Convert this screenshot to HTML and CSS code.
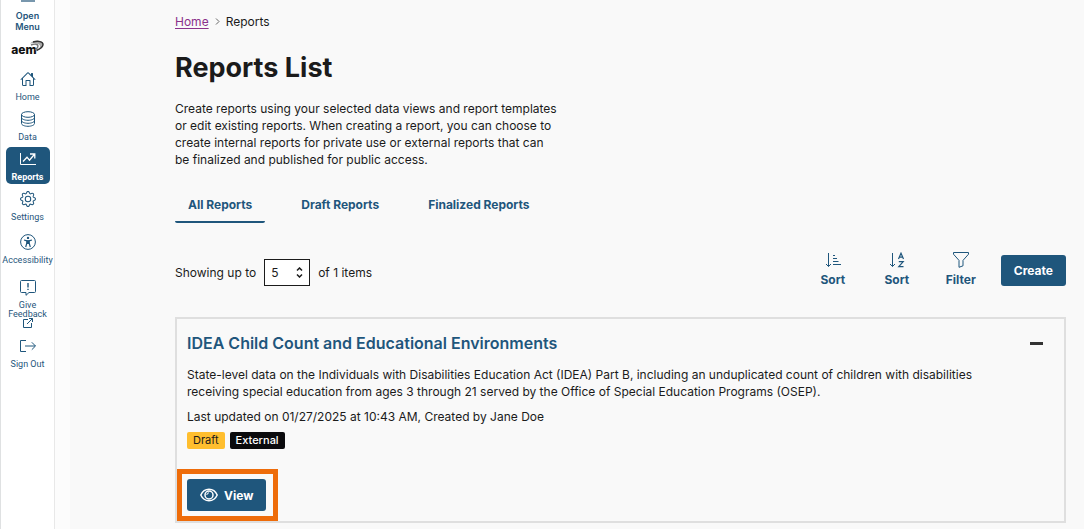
FILE: index.html
```html
<!DOCTYPE html>
<html lang="en">
<head>
  <meta charset="UTF-8">
  <meta name="viewport" content="width=device-width, initial-scale=1">
  <title>Reports List</title>
  <link rel="stylesheet" href="styles.css">
</head>
<body>
  <nav class="sidebar" aria-label="Main">
    <button class="menu-toggle" type="button">
      <span class="menu-bar"></span>
      Open Menu
    </button>
    <a class="logo" href="#">
      <span>aem</span>
      <svg width="14" height="13" viewBox="0 0 14 13">
        <path d="M0 3.500C3 .5 9 0 12 2c3 2.500 1 7-5 8.500C10 8 11 6 9 4.500 7 3 3 3 0 3.500z" fill="#aaa"/>
        <path d="M1 5c4-1.500 7-1 7 1S6 9 5 10" fill="none" stroke="#777" stroke-width="1.400"/>
        <path d="M3 2C8 .5 13 1.500 13 4.500S10 9 6.500 10.500" fill="none" stroke="#333" stroke-width="1.400"/>
      </svg>
    </a>
    <a class="nav-item" href="#">
      <svg class="icon" viewBox="0 0 16 16"><path d="M8.707 1.500a1 1 0 0 0-1.414 0L.646 8.146a.5.5 0 0 0 .708.708L2 8.207V13.500A1.500 1.500 0 0 0 3.500 15h3V10h3v5h3a1.500 1.500 0 0 0 1.500-1.500V8.207l.646.647a.5.5 0 0 0 .708-.708L13 5.793V2.500a.5.5 0 0 0-.5-.5h-1a.5.5 0 0 0-.5.5v1.293zM13 7.207V13.500a.5.5 0 0 1-.5.5h-2V9.500a.5.5 0 0 0-.5-.5H6a.5.5 0 0 0-.5.5V14h-2a.5.5 0 0 1-.5-.5V7.207l5-5z" fill-rule="evenodd"/></svg>
      <span>Home</span>
    </a>
    <a class="nav-item" href="#">
      <svg class="icon line" viewBox="0 0 16 16"><ellipse cx="8" cy="3.500" rx="6.500" ry="2.800"/><path d="M1.500 3.500v9c0 1.500 2.900 2.800 6.500 2.800s6.500-1.300 6.500-2.800v-9M1.500 6.500C1.500 8 4.400 9.300 8 9.300s6.500-1.300 6.500-2.800M1.500 9.500c0 1.500 2.900 2.800 6.500 2.800s6.500-1.300 6.500-2.800"/></svg>
      <span>Data</span>
    </a>
    <a class="nav-item active" href="#">
      <svg class="icon line" viewBox="0 0 16 16"><path d="M.5 2v11.500H16"/><path d="M3 10.500l4-4.300 2.500 3L14.300 3.500M10 3h4.800v4.500" stroke-width="1.300"/></svg>
      <span>Reports</span>
    </a>
    <a class="nav-item" href="#">
      <svg class="icon" viewBox="0 0 16 16"><path d="M8 4.754a3.246 3.246 0 1 0 0 6.492 3.246 3.246 0 0 0 0-6.492M5.754 8a2.246 2.246 0 1 1 4.492 0 2.246 2.246 0 0 1-4.492 0"/><path d="M9.796 1.343c-.527-1.790-3.065-1.790-3.592 0l-.094.319a.873.873 0 0 1-1.255.520l-.292-.160c-1.640-.892-3.433.902-2.540 2.541l.159.292a.873.873 0 0 1-.520 1.255l-.319.094c-1.790.527-1.790 3.065 0 3.592l.319.094a.873.873 0 0 1 .520 1.255l-.160.292c-.892 1.640.901 3.434 2.541 2.540l.292-.159a.873.873 0 0 1 1.255.520l.094.319c.527 1.790 3.065 1.790 3.592 0l.094-.319a.873.873 0 0 1 1.255-.520l.292.160c1.640.893 3.434-.902 2.540-2.541l-.159-.292a.873.873 0 0 1 .520-1.255l.319-.094c1.790-.527 1.790-3.065 0-3.592l-.319-.094a.873.873 0 0 1-.520-1.255l.160-.292c.893-1.640-.902-3.433-2.541-2.540l-.292.159a.873.873 0 0 1-1.255-.520zm-2.633.283c.246-.835 1.428-.835 1.674 0l.094.319a1.873 1.873 0 0 0 2.693 1.115l.291-.160c.764-.415 1.600.420 1.184 1.185l-.159.292a1.873 1.873 0 0 0 1.116 2.692l.318.094c.835.246.835 1.428 0 1.674l-.319.094a1.873 1.873 0 0 0-1.115 2.693l.160.291c.415.764-.420 1.600-1.185 1.184l-.291-.159a1.873 1.873 0 0 0-2.693 1.116l-.094.318c-.246.835-1.428.835-1.674 0l-.094-.319a1.873 1.873 0 0 0-2.692-1.115l-.292.160c-.764.415-1.600-.420-1.184-1.185l.159-.291A1.873 1.873 0 0 0 1.945 8.930l-.319-.094c-.835-.246-.835-1.428 0-1.674l.319-.094A1.873 1.873 0 0 0 3.060 4.377l-.160-.292c-.415-.764.420-1.600 1.185-1.184l.292.159a1.873 1.873 0 0 0 2.692-1.115z"/></svg>
      <span>Settings</span>
    </a>
    <a class="nav-item spaced" href="#">
      <svg class="icon line" viewBox="0 0 16 16"><circle cx="8" cy="8" r="7.400"/><circle cx="8" cy="3.900" r="1.200" fill="currentColor" stroke="none"/><path d="M4 6l2.800.8v2.400L5.700 13M12 6l-2.800.8v2.400l1.100 3.800M6.800 6.800h2.400M7 9.500h2" stroke-width="1.200"/><path d="M6.800 6.500h2.400v3.500H6.800z" fill="currentColor" stroke="none"/></svg>
      <span>Accessibility</span>
    </a>
    <a class="nav-item feedback" href="#">
      <svg class="icon line" viewBox="0 0 16 16"><path d="M1.500.5h13a1 1 0 0 1 1 1v10a1 1 0 0 1-1 1H9l-3 2.800v-2.800H1.500a1 1 0 0 1-1-1v-10a1 1 0 0 1 1-1z"/><path d="M8 3v4.500M8 8.700v1.300" stroke-width="1.400"/></svg>
      <span>Give Feedback</span>
      <svg class="icon-small line" viewBox="0 0 10 10"><path d="M5 1.500H.5v8h8V5M6 .5h3.500V4M9.500.5L4 6"/></svg>
    </a>
    <a class="nav-item" href="#">
      <svg class="icon line" viewBox="0 0 16 16"><path d="M6 2.500H.5v11H6M5 8h10.300M11.800 4.300L15.500 8l-3.700 3.700"/></svg>
      <span>Sign Out</span>
    </a>
  </nav>

  <main class="content">
    <nav class="breadcrumb" aria-label="Breadcrumb">
      <a href="#">Home</a>
      <svg width="5" height="7" viewBox="0 0 5 7"><path d="M1 .5l3 3-3 3" fill="none" stroke="#666"/></svg>
      <span>Reports</span>
    </nav>

    <h1>Reports List</h1>
    <p class="intro">Create reports using your selected data views and report templates<br>
      or edit existing reports. When creating a report, you can choose to<br>
      create internal reports for private use or external reports that can<br>
      be finalized and published for public access.</p>

    <div class="tabs" role="tablist">
      <button class="tab selected" type="button" role="tab" aria-selected="true">All Reports</button>
      <button class="tab" type="button" role="tab" aria-selected="false">Draft Reports</button>
      <button class="tab" type="button" role="tab" aria-selected="false">Finalized Reports</button>
    </div>

    <div class="toolbar">
      <div class="paging">
        <label for="pageSize">Showing up to</label>
        <div class="select-wrap">
          <select id="pageSize">
            <option>5</option>
            <option>10</option>
            <option>25</option>
          </select>
          <svg class="select-arrows" width="7" height="11" viewBox="0 0 7 11"><path d="M1 3.500L3.500 1 6 3.500M1 7.500L3.500 10 6 7.500" fill="none" stroke="#1b1b1b" stroke-width="1.500"/></svg>
        </div>
        <span>of 1 items</span>
      </div>
      <div class="actions">
        <button class="tool" type="button">
          <svg class="icon line" viewBox="0 0 16 16"><path d="M3.500 1v13.500M1 12l2.500 2.500L6 12M8 3.500h2M8 6.500h4M8 9.500h5.500M8 12.500h8"/></svg>
          Sort
        </button>
        <button class="tool" type="button">
          <svg class="icon line" viewBox="0 0 16 16"><path d="M3.500 1v13.500M1 12l2.500 2.500L6 12"/><path d="M9.500 7L12 1.200 14.500 7M10.300 5.200h3.400M9.800 9.600h4.400l-4.400 5h4.700" stroke-width="1.200"/></svg>
          Sort
        </button>
        <button class="tool" type="button">
          <svg class="icon line" viewBox="0 0 16 16"><path d="M.5.5h15v1.700L10 8.400v5.400l-4 1.500V8.400L.5 2.200z"/></svg>
          Filter
        </button>
        <button class="btn" type="button">Create</button>
      </div>
    </div>

    <article class="report">
      <header class="report-header">
        <h2>IDEA Child Count and Educational Environments</h2>
        <button class="collapse" type="button" aria-label="Collapse"></button>
      </header>
      <p>State-level data on the Individuals with Disabilities Education Act (IDEA) Part B, including an unduplicated count of children with disabilities<br>
        receiving special education from ages 3 through 21 served by the Office of Special Education Programs (OSEP).</p>
      <p class="updated">Last updated on 01/27/2025 at 10:43 AM, Created by Jane Doe</p>
      <div class="tags">
        <span class="tag draft">Draft</span>
        <span class="tag external">External</span>
      </div>
      <div class="highlight">
        <button class="btn view" type="button">
          <svg width="18" height="14" viewBox="0 0 18 14" fill="none" stroke="currentColor"><path d="M.8 7C2.500 3.200 5.500 1.300 9 1.300S15.500 3.200 17.200 7C15.500 10.800 12.500 12.700 9 12.700S2.500 10.800.8 7z" stroke-width="1.500"/><circle cx="9" cy="7" r="4" stroke-width="1.500"/><path d="M6.800 7A2.200 2.200 0 0 1 9 4.800"/></svg>
          View
        </button>
      </div>
    </article>
  </main>
</body>
</html>
```

FILE: styles.css
```css
* { box-sizing: border-box; }
body {
  display: flex;
  margin: 0;
  min-height: 100vh;
  background: #fcfcfc;
  color: #1b1b1b;
  font-family: Inter, "Liberation Sans", sans-serif;
  font-size: 12px;
  line-height: 17px;
}
h1, h2, p { margin: 0; }
button { font-family: inherit; cursor: pointer; }

/* sidebar */
.sidebar {
  display: flex;
  flex-direction: column;
  align-items: center;
  gap: 3px;
  flex: none;
  width: 55px;
  margin-right: 15px;
  background: #fff;
  border-left: 1px solid #dfe1e2;
  border-right: 1px solid #e8e8e8;
}
.menu-toggle {
  display: flex;
  flex-direction: column;
  align-items: center;
  gap: 8px;
  width: 44px;
  padding: 0;
  border: 0;
  background: none;
  color: #1f567c;
  font-size: 9px;
  font-weight: 600;
  line-height: 11px;
}
.menu-bar {
  width: 14px;
  height: 2px;
  background: #7897ad;
}
.logo {
  display: flex;
  align-items: center;
  height: 29px;
  color: #111;
  font-size: 12px;
  font-weight: 800;
  text-decoration: none;
}
.logo svg { margin: -6px 0 0 -7px; }
.nav-item {
  display: flex;
  flex-direction: column;
  align-items: center;
  gap: 4px;
  width: 44px;
  padding: 4px 0 1px;
  border-radius: 5px;
  color: #1f567c;
  font-family: Roboto, "Liberation Sans", sans-serif;
  font-size: 9px;
  line-height: 12px;
  text-align: center;
  text-decoration: none;
}
.nav-item.active {
  background: #1f567c;
  color: #fff;
  font-weight: 700;
}
.nav-item.spaced { margin-top: 3px; }
.nav-item.feedback {
  gap: 0;
  margin: 6px 0 2px;
  line-height: 9px;
}
.feedback .icon { margin-bottom: 5px; }
.icon {
  width: 16px;
  height: 16px;
  fill: currentColor;
}
.icon-small {
  width: 10px;
  height: 10px;
  margin-top: -1px;
}
.line {
  fill: none;
  stroke: currentColor;
}

/* page */
.content {
  flex: 1;
  min-width: 0;
  padding: 13px 18px 6px 105px;
  background: #f9f9f9;
}
.breadcrumb {
  display: flex;
  align-items: center;
  gap: 6px;
}
.breadcrumb a { color: #8b308b; text-underline-offset: 2px; }
h1 {
  margin-top: 22px;
  font-size: 27px;
  line-height: 32px;
}
.intro { margin-top: 16px; }
.tabs {
  display: flex;
  gap: 23px;
  margin-top: 20px;
}
.tab {
  padding: 8px 13px;
  border: 0;
  border-bottom: 2px solid transparent;
  border-radius: 2px;
  background: none;
  color: #1f567c;
  font-size: 12px;
  font-weight: 700;
  line-height: 17px;
}
.tab.selected { border-bottom-color: #1f567c; }
.toolbar {
  display: flex;
  align-items: flex-end;
  justify-content: space-between;
  margin-top: 29px;
}
.paging {
  display: flex;
  align-items: center;
  gap: 8px;
  padding-bottom: 2px;
}
.select-wrap { position: relative; }
.select-wrap select {
  display: block;
  width: 46px;
  height: 27px;
  padding: 0 6px;
  border: 1px solid #1b1b1b;
  border-radius: 0;
  appearance: none;
  background: #fff;
  color: inherit;
  font: inherit;
}
.select-arrows {
  position: absolute;
  top: 8px;
  right: 7px;
  pointer-events: none;
}
.actions {
  display: flex;
  align-items: center;
}
.tool {
  display: flex;
  flex-direction: column;
  align-items: center;
  gap: 3px;
  min-width: 64px;
  padding: 0;
  border: 0;
  background: none;
  color: #1f567c;
  font-size: 12px;
  font-weight: 700;
  line-height: 17px;
}
.btn {
  padding: 7px 13px;
  border: 0;
  border-radius: 3px;
  background: #1f567c;
  color: #fff;
  font-size: 12px;
  font-weight: 700;
  line-height: 17px;
}
.actions .btn { margin-left: 8px; }

/* report card */
.report {
  margin-top: 29px;
  padding: 12px 10px 0;
  border: 2px solid #dfdfdf;
}
.report-header {
  display: flex;
  align-items: center;
  justify-content: space-between;
  margin-bottom: 11px;
}
h2 {
  color: #1f567c;
  font-size: 16px;
  font-weight: 600;
  line-height: 24px;
}
.collapse {
  width: 13px;
  height: 3px;
  margin-right: 11px;
  padding: 0;
  border: 0;
  background: #333;
}
.updated { margin-top: 8px; }
.tags {
  display: flex;
  gap: 5px;
  margin-top: 7px;
}
.tag {
  padding: 0 6px;
  border-radius: 2px;
  font-size: 11px;
  line-height: 17px;
}
.tag.draft { background: #ffbe2e; }
.tag.external {
  background: #0b0b0d;
  color: #fff;
  font-weight: 500;
}
.highlight {
  width: fit-content;
  margin: 20px 0 0 -10px;
  padding: 5px 7px 5px 5px;
  border: 5px solid #ee6c0a;
}
.view {
  display: flex;
  align-items: center;
  gap: 6px;
  height: 32px;
}
```
